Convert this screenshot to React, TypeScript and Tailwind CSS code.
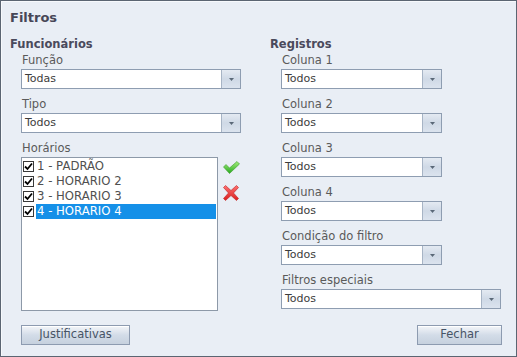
const font = { fontFamily: '"DejaVu Sans", Verdana, sans-serif' };

function Select({ value, wide }: { value: string; wide?: boolean }) {
  return (
    <div
      className={`flex h-[20px] border border-[#8e9db1] bg-white ${wide ? "w-[220px]" : "w-[161px]"}`}
    >
      <div className="flex flex-1 items-center pl-[3px] text-[11px] text-[#3c3c3c]">{value}</div>
      <div className="flex w-[19px] items-center justify-center border-l border-[#a7b4c5] bg-gradient-to-b from-[#e4eaf2] via-[#cfd9e6] to-[#dbe3ee]">
        <svg width="7" height="5" viewBox="0 0 7 5">
          <path d="M1 1 L6 1 L3.5 4 Z" fill="#5a6878" />
        </svg>
      </div>
    </div>
  );
}

function Field({ label, value, wide }: { label: string; value: string; wide?: boolean }) {
  return (
    <div className="flex flex-col">
      <div className="mb-[1px] h-[16px] pl-[1px] text-[11.5px] leading-[16px] text-[#5a5a5a]">{label}</div>
      <Select value={value} wide={wide} />
    </div>
  );
}

function Button({ label, w }: { label: string; w: string }) {
  return (
    <button
      className={`flex h-[20px] ${w} items-center justify-center border border-[#8d9bb0] bg-gradient-to-b from-[#f4f6f9] via-[#d3dce8] to-[#c6d1de] text-[11.5px] text-[#475466] shadow-[inset_0_1px_0_#ffffff]`}
    >
      {label}
    </button>
  );
}

function Check() {
  return (
    <svg width="17" height="13" viewBox="0 0 17 13">
      <defs>
        <linearGradient id="gc" x1="0" y1="0" x2="0" y2="1">
          <stop offset="0" stopColor="#a4ee7c" />
          <stop offset="1" stopColor="#26a81e" />
        </linearGradient>
      </defs>
      <path d="M0.5 6 L3 3.5 L6.5 7 L14 0.5 L16.5 3 L6.5 12.5 Z" fill="url(#gc)" stroke="#3a9a2a" strokeWidth="0.6" />
    </svg>
  );
}

function Cross() {
  return (
    <svg width="16" height="16" viewBox="0 0 16 16">
      <defs>
        <linearGradient id="gx" x1="0" y1="0" x2="0" y2="1">
          <stop offset="0" stopColor="#ff7070" />
          <stop offset="1" stopColor="#d81f1f" />
        </linearGradient>
      </defs>
      <path
        d="M2.5 0.5 L8 5.5 L13.5 0.5 L15.5 2.5 L10.5 8 L15.5 13.5 L13.5 15.5 L8 10.5 L2.5 15.5 L0.5 13.5 L5.5 8 L0.5 2.5 Z"
        fill="url(#gx)"
        stroke="#c02020"
        strokeWidth="0.6"
      />
    </svg>
  );
}

const horarios = ["1 - PADRÃO", "2 - HORARIO 2", "3 - HORARIO 3", "4 - HORARIO 4"];

export default function App() {
  return (
    <div style={font} className="h-[357px] w-[517px] bg-white">
      <div className="flex h-full w-full flex-col border border-[#5b6572] bg-[#e9eef5] px-[9px] pt-[8px] shadow-[inset_1px_1px_0_#f7f9fc]">
        <div className="h-[18px] text-[13px] font-bold leading-[18px] text-[#474757]">Filtros</div>

        <div className="mt-[9px] flex">
          {/* Funcionários */}
          <div className="flex w-[260px] flex-col">
            <div className="h-[16px] text-[11.5px] font-bold leading-[16px] text-[#4a4a5c]">Funcionários</div>
            <div className="flex flex-col gap-[7px] pl-[11px]">
              <Field label="Função" value="Todas" wide />
              <Field label="Tipo" value="Todos" wide />
              <div className="flex flex-col">
                <div className="mb-[1px] h-[16px] pl-[1px] text-[11.5px] leading-[16px] text-[#5a5a5a]">Horários</div>
                <div className="flex items-start">
                  <div className="flex h-[154px] w-[197px] flex-col border border-[#8d99a8] bg-white pt-[1px] pr-[1px]">
                    {horarios.map((h, i) => (
                      <div key={h} className="flex h-[15px] items-center">
                        <span className="ml-[1px] flex h-[11px] w-[11px] items-center justify-center border border-[#3a3a3a] bg-white">
                          <svg width="9" height="9" viewBox="0 0 9 9">
                            <path d="M1 4.5 L3.5 7 L8 1.5" fill="none" stroke="#000" strokeWidth="1.8" />
                          </svg>
                        </span>
                        <span
                          className={`ml-[2px] flex h-[15px] flex-1 items-center pl-[1px] text-[11.7px] ${
                            i === 3 ? "bg-[#1590e8] text-white" : "text-[#505050]"
                          }`}
                        >
                          {h}
                        </span>
                      </div>
                    ))}
                  </div>
                  <div className="ml-[5px] flex flex-col pt-[4px]">
                    <Check />
                    <div className="mt-[11px]">
                      <Cross />
                    </div>
                  </div>
                </div>
              </div>
            </div>
            <div className="mt-[14px] pl-[11px]">
              <Button label="Justificativas" w="w-[109px]" />
            </div>
          </div>

          {/* Registros */}
          <div className="flex flex-1 flex-col">
            <div className="h-[16px] text-[11.5px] font-bold leading-[16px] text-[#4a4a5c]">Registros</div>
            <div className="flex flex-col gap-[7px] pl-[11px]">
              <Field label="Coluna 1" value="Todos" />
              <Field label="Coluna 2" value="Todos" />
              <Field label="Coluna 3" value="Todos" />
              <Field label="Coluna 4" value="Todos" />
              <Field label="Condição do filtro" value="Todos" />
              <Field label="Filtros especiais" value="Todos" wide />
            </div>
            <div className="mt-[16px] flex pl-[147px]">
              <Button label="Fechar" w="w-[85px]" />
            </div>
          </div>
        </div>
      </div>
    </div>
  );
}
